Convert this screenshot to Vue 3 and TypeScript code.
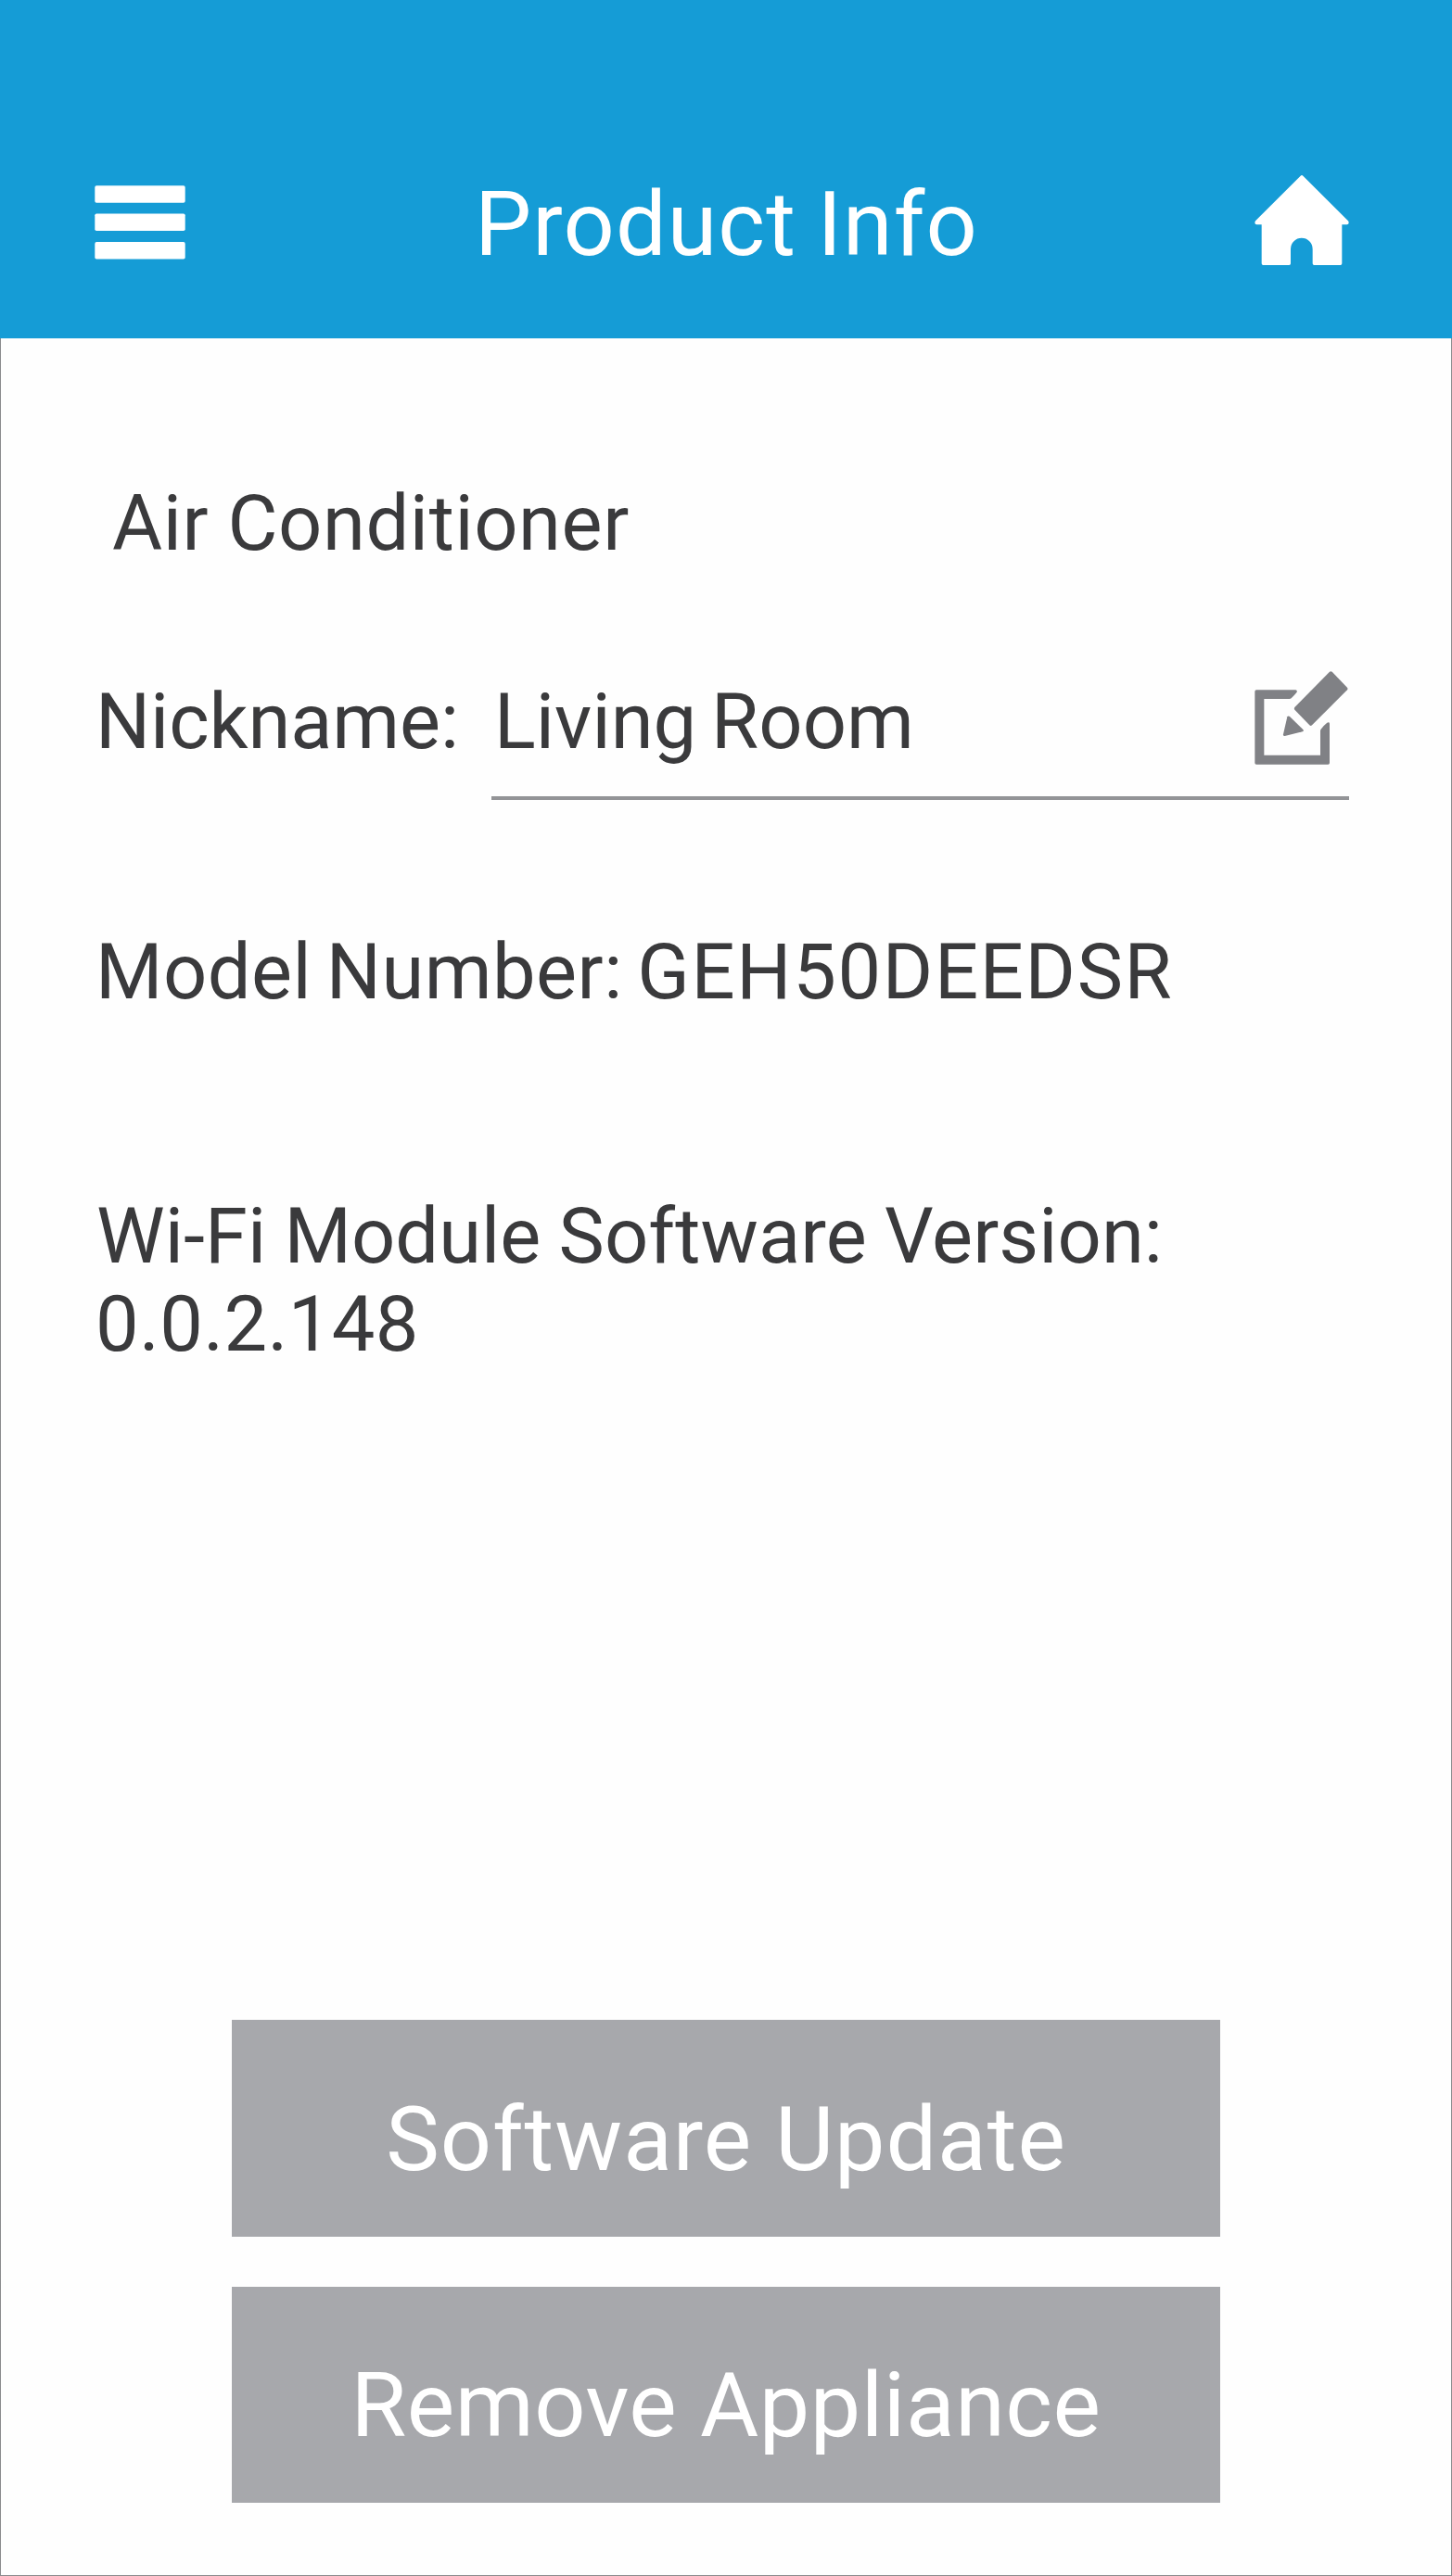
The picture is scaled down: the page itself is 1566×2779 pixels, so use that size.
<script setup lang="ts">
import { ref } from 'vue'

const title = 'Product Info'
const appliance = 'Air Conditioner'
const nickname = ref('Living Room')
const model = 'GEH50DEEDSR'
const version = '0.0.2.148'
</script>

<template>
  <div class="screen">
    <header class="bar">
      <svg class="menu" viewBox="0 0 98 80" role="img" aria-label="Menu">
        <rect x="0.3" y="0.2" width="97.4" height="18.5" rx="1.8" />
        <rect x="0.3" y="30.5" width="97.4" height="18.5" rx="1.8" />
        <rect x="0.3" y="61.1" width="97.4" height="18.5" rx="1.8" />
      </svg>
      <h1 class="title">{{ title }}</h1>
      <svg class="home" viewBox="68 57 306 292" role="img" aria-label="Home">
        <path d="M217 59q4-4 8 0L371 205q2 2 2 6q0 6-6 6H351V343q0 5-5 5H261q-5 0-5-5V296a35.500 35.500 0 0 0-71 0V343q0 5-5 5H96q-5 0-5-5V217H75q-6 0-6-6q0-3 2-6Z" />
      </svg>
    </header>

    <main class="content">
      <p class="line appliance">{{ appliance }}</p>
      <div class="nickname-row">
        <span class="line label">Nickname:</span>
        <div class="field">
          <span class="line value">{{ nickname }}</span>
          <svg class="edit" viewBox="69 71 303 304" role="img" aria-label="Edit">
            <path d="M75 132H202q6 1 4 7q-9 11-18 20q-3 2-6 2H100V343H282V265q0-4 3-7q8-11 18-19q8-5 9 2V368q0 5-5 5H75q-5 0-5-5V137q0-5 5-5Z" />
            <path d="M312 73q4-3 8 0L369 124q3 4 0 8L255 246q-4 4-8 0L199 196q-3-4 0-8Z" />
            <path d="M175 219q3-5 8-1L226 260q4 5-2 7L167 281q-6 1-5-5Z" />
          </svg>
        </div>
      </div>
      <p class="line model">Model Number: <span class="model-code">{{ model }}</span></p>
      <div class="software">
        <p class="line software-label">Wi-Fi Module Software Version:</p>
        <p class="line software-version">{{ version }}</p>
      </div>
      <div class="actions">
        <button type="button" class="action update">Software Update</button>
        <button type="button" class="action remove">Remove Appliance</button>
      </div>
    </main>
  </div>
</template>

<style>
body {
  margin: 0;
  background: #fefefe;
}
</style>

<style scoped>
.screen {
  display: flex;
  flex-direction: column;
  width: 1566px;
  height: 2779px;
  overflow: hidden;
  box-sizing: border-box;
  background: #fefefe;
  color: #3a3a3c;
  font-family: Roboto, "Liberation Sans", sans-serif;
}

.bar {
  display: flex;
  flex: none;
  align-items: flex-start;
  box-sizing: border-box;
  height: 365px;
  padding: 187px 111px 0 102px;
  background: #159cd6;
  color: #fff;
}

.menu {
  flex: none;
  width: 98px;
  height: 80px;
  margin-top: 13px;
  fill: #fff;
}

.title {
  margin: 0 0 0 312px;
  font-size: 97px;
  font-weight: 400;
  line-height: 110px;
  letter-spacing: 1.15px;
  word-spacing: -3px;
  white-space: nowrap;
}

.home {
  flex: none;
  width: 102px;
  height: 97.3px;
  margin: 2px 0 0 auto;
  fill: #fff;
}

.content {
  display: flex;
  flex: 1;
  flex-direction: column;
  box-sizing: border-box;
  padding: 152px 110px 78px 102px;
  border: solid #8a8b8e;
  border-width: 0 1px 1px;
}

.line {
  margin: 0;
  font-size: 83px;
  line-height: 95px;
  white-space: nowrap;
}

.appliance {
  padding-left: 18px;
  letter-spacing: 0.6px;
  word-spacing: -1px;
}

.nickname-row {
  display: flex;
  align-items: flex-start;
  justify-content: space-between;
  margin-top: 119px;
}

.label {
  letter-spacing: -0.1px;
}

.field {
  display: flex;
  align-items: flex-start;
  justify-content: space-between;
  box-sizing: border-box;
  width: 925px;
  height: 132px;
  padding-left: 3px;
  border-bottom: 4px solid #939497;
}

.value {
  letter-spacing: 0.1px;
  word-spacing: -5px;
}

.edit {
  flex: none;
  width: 101px;
  height: 101.3px;
  margin: -7.3px 1px 0 0;
  fill: #808185;
}

.model {
  margin-top: 138px;
  letter-spacing: 0.48px;
  word-spacing: -5.5px;
}

.model-code {
  letter-spacing: 1.65px;
}

.software {
  margin-top: 190px;
}

.software-label {
  padding-left: 1px;
  letter-spacing: 0.08px;
  word-spacing: -1.5px;
}

.software-version {
  letter-spacing: 0.37px;
}

.actions {
  display: flex;
  flex-direction: column;
  gap: 54px;
  width: 1066px;
  margin: auto 0 0 147px;
}

.action {
  height: 233.500px;
  padding: 24px 0 0;
  border: 0;
  background: #a7a8ac;
  color: #fff;
  font-family: inherit;
  font-size: 97px;
  line-height: 110px;
}

.update {
  letter-spacing: 0.95px;
}

.remove {
  letter-spacing: 0.53px;
}
</style>
